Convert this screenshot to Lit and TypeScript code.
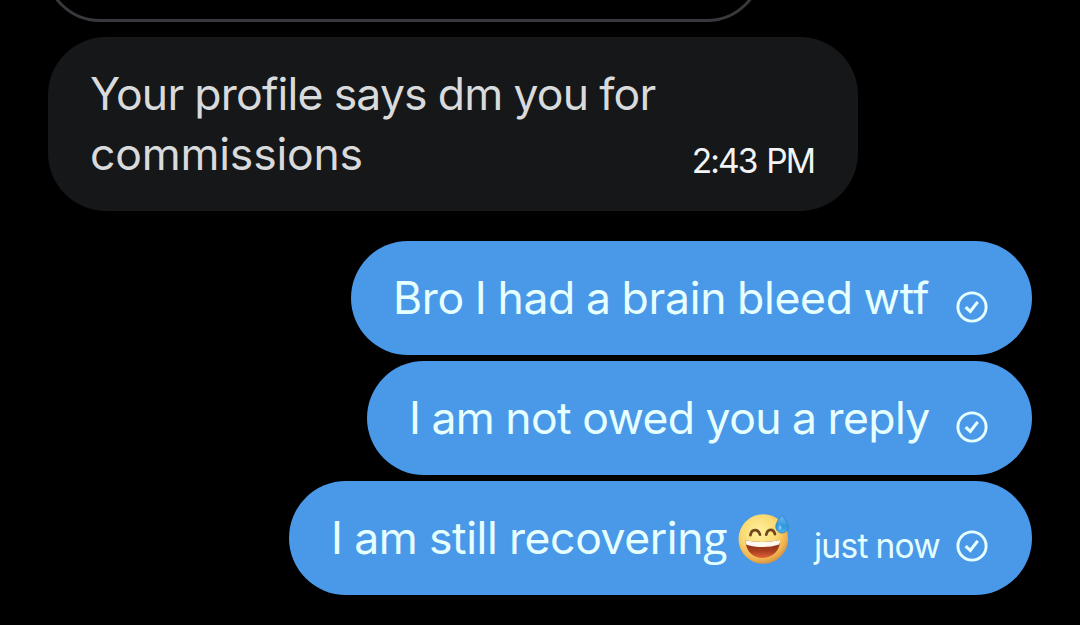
import { LitElement, html, css, nothing } from "lit";
import { customElement, property } from "lit/decorators.js";
import { styleMap } from "lit/directives/style-map.js";

interface Line {
  text: string;
  tracking: number;
  gap: number;
}

interface Message {
  lines: Line[];
  width: number;
  sent: boolean;
  emoji?: boolean;
  time?: string;
}

const messages: Message[] = [
  {
    lines: [
      { text: "Your profile says dm you for", tracking: -0.8, gap: -0.7 },
      { text: "commissions", tracking: -0.2, gap: 0 },
    ],
    width: 810,
    sent: false,
    time: "2:43 PM",
  },
  {
    lines: [
      { text: "Bro I had a brain bleed wtf", tracking: -0.3, gap: -1.3 },
    ],
    width: 681,
    sent: true,
  },
  {
    lines: [
      { text: "I am not owed you a reply", tracking: -0.6, gap: -0.8 },
    ],
    width: 665,
    sent: true,
  },
  {
    lines: [{ text: "I am still recovering", tracking: -0.4, gap: -0.5 }],
    width: 743,
    sent: true,
    emoji: true,
    time: "just now",
  },
];

@customElement("sent-check")
class SentCheck extends LitElement {
  static styles = css`
    :host,
    svg {
      display: block;
      width: 32px;
      height: 32px;
    }
  `;

  render() {
    return html`<svg viewBox="0 0 32 32" fill="none" stroke="#e6ffff">
      <circle cx="16" cy="16" r="14.1" stroke-width="2.9" />
      <path d="M9.6 16.2l4.7 4.3 7.4-9.6" stroke-width="3.1" />
    </svg>`;
  }
}

@customElement("sweat-smile")
class SweatSmile extends LitElement {
  static styles = css`
    :host,
    svg {
      display: block;
      width: 54px;
      height: 54px;
    }
  `;

  render() {
    return html`<svg viewBox="0 0 54 54">
      <defs>
        <radialGradient id="face" cx="0.42" cy="0.36" r="0.66">
          <stop offset="0" stop-color="#fff3a0" />
          <stop offset="0.55" stop-color="#fad970" />
          <stop offset="0.85" stop-color="#eeb04c" />
          <stop offset="1" stop-color="#d0904e" />
        </radialGradient>
        <linearGradient id="mouth" x1="0" y1="0" x2="0" y2="1">
          <stop offset="0" stop-color="#803018" />
          <stop offset="0.6" stop-color="#a83c1e" />
          <stop offset="1" stop-color="#e2643a" />
        </linearGradient>
        <linearGradient id="drop" x1="0" y1="0" x2="0" y2="1">
          <stop offset="0" stop-color="#6cbcee" />
          <stop offset="0.6" stop-color="#3198e0" />
          <stop offset="1" stop-color="#4cb0ee" />
        </linearGradient>
      </defs>
      <circle cx="26.3" cy="29" r="24.8" fill="url(#face)" />
      <g fill="none" stroke="#70451d" stroke-width="2.7" stroke-linecap="round">
        <path d="M13.4 25.2c1.2-6.6 7.6-6.6 9.6-.6" />
        <path d="M29.2 24.700c1.400-6.400 7.200-6.400 8.800-.5" />
      </g>
      <path
        d="M8.600 30.300c11 2.200 23.600 2.200 34.400-.3.3 10.500-7.200 18-17.200 18S8.400 40.900 8.600 30.300z"
        fill="url(#mouth)"
      />
      <path
        d="M8.600 30.300c11 2.200 23.600 2.200 34.400-.3.1 1.800-.2 3.200-.8 4.500-10.100 3.300-22.200 3.300-32.700.2-.7-1.500-.9-2.900-.9-4.400z"
        fill="#fff8ee"
      />
      <path
        d="M44.900 5.200c2.800 3.700 6.100 7.500 6.100 11.400 0 3.700-2.600 6.400-6 6.400s-6.200-2.700-6.200-6.400c0-3.900 3.200-7.700 6.100-11.400z"
        fill="url(#drop)"
        stroke="#2f7fb8"
        stroke-width="0.8"
      />
      <ellipse cx="43" cy="17.500" rx="1.300" ry="2.300" fill="#7ccbf6" />
    </svg>`;
  }
}

@customElement("chat-bubble")
class ChatBubble extends LitElement {
  @property({ attribute: false }) message!: Message;

  static styles = css`
    .bubble {
      box-sizing: border-box;
      display: flex;
      align-items: flex-end;
      justify-content: space-between;
      padding: 27px 44px 27px 42px;
      border-radius: 58px;
      background: #151719;
      color: #d9dadc;
    }
    .sent {
      background: #4a99e9;
      color: #e6ffff;
      border-radius: 57px;
    }
    .text {
      display: flex;
    }
    .line {
      font-size: 44.5px;
      line-height: 60px;
      white-space: pre;
    }
    .g {
      font-family: "Open Sans", sans-serif;
      line-height: 0;
    }
    sweat-smile {
      margin: 2px 0 0 10px;
    }
    .meta {
      display: flex;
      align-items: center;
      gap: 16px;
      height: 32px;
      margin-bottom: 7px;
      font-size: 33.5px;
      line-height: 32px;
      letter-spacing: -1.9px;
      word-spacing: 2px;
      white-space: pre;
      color: #f2f3f4;
    }
    .sent .meta {
      margin-bottom: 5px;
      letter-spacing: -0.7px;
      word-spacing: -1px;
      color: #e6ffff;
    }
    .sent .timed {
      margin-bottom: 6px;
    }
  `;

  renderLine({ text, tracking, gap }: Line) {
    return html`<div
      class="line"
      style=${styleMap({
        letterSpacing: `${tracking}px`,
        wordSpacing: `${gap}px`,
      })}
    >${text.split(/(g)/).map((part) =>
      part === "g" ? html`<span class="g">g</span>` : part
    )}</div>`;
  }

  render() {
    const { lines, width, sent, emoji, time } = this.message;
    return html`<div
      class="bubble ${sent ? "sent" : ""}"
      style=${styleMap({ width: `${width}px` })}
    >
      <div class="text">
        <div>${lines.map((line) => this.renderLine(line))}</div>
        ${emoji ? html`<sweat-smile></sweat-smile>` : nothing}
      </div>
      <div class="meta ${time ? "timed" : ""}">
        ${time ? html`<span>${time}</span>` : nothing}
        ${sent ? html`<sent-check></sent-check>` : nothing}
      </div>
    </div>`;
  }
}

@customElement("app-root")
class AppRoot extends LitElement {
  static styles = css`
    :host {
      display: flex;
      flex-direction: column;
      box-sizing: border-box;
      height: 625px;
      overflow: hidden;
      background: #000;
      padding: 0 48px;
      font-family: Inter, "Liberation Sans", sans-serif;
    }
    .quoted {
      box-sizing: border-box;
      flex: none;
      width: 719px;
      height: 122px;
      margin: -100px 0 15px -4px;
      border: 3px solid #38393c;
      border-radius: 56px;
    }
    .outgoing {
      display: flex;
      flex-direction: column;
      align-items: flex-end;
      gap: 6px;
      margin-top: 30px;
    }
  `;

  render() {
    return html`
      <div class="quoted"></div>
      ${messages
        .filter((m) => !m.sent)
        .map((m) => html`<chat-bubble .message=${m}></chat-bubble>`)}
      <div class="outgoing">
        ${messages
          .filter((m) => m.sent)
          .map((m) => html`<chat-bubble .message=${m}></chat-bubble>`)}
      </div>
    `;
  }
}
